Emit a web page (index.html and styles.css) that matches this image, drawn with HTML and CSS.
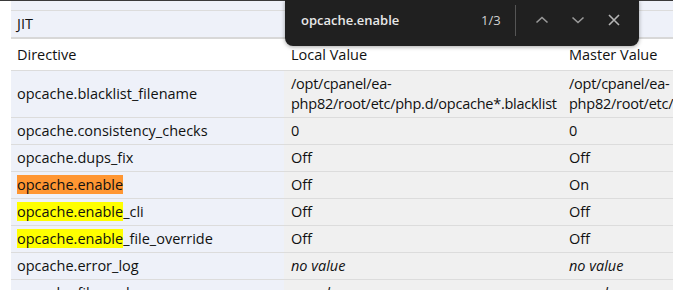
FILE: index.html
```html
<!DOCTYPE html>
<html>
<head>
    <meta charset="UTF-8">
    <meta name="viewport" content="width=device-width, initial-scale=1.0">
    <title>opcache</title>
    <link rel="stylesheet" href="styles.css">
</head>
<body>
    <div class="topline"></div>
    <div class="page">
        <table class="info">
            <tr class="section cut">
                <td class="e"><div class="clip"><span>File cache</span></div></td>
                <td class="v"></td>
                <td class="v"></td>
            </tr>
            <tr class="section jit">
                <td class="e">JIT</td>
                <td class="v"></td>
                <td class="v"></td>
            </tr>
            <tr class="head">
                <td>Directive</td>
                <td>Local Value</td>
                <td>Master Value</td>
            </tr>
            <tr>
                <td class="e">opcache.blacklist_filename</td>
                <td class="v path">/opt/cpanel/ea-<br>php82/root/etc/php.d/opcache*.blacklist</td>
                <td class="v path">/opt/cpanel/ea-<br>php82/root/etc/php.d/opcache*.blacklist</td>
            </tr>
            <tr>
                <td class="e">opcache.consistency_checks</td>
                <td class="v">0</td>
                <td class="v">0</td>
            </tr>
            <tr>
                <td class="e">opcache.dups_fix</td>
                <td class="v">Off</td>
                <td class="v">Off</td>
            </tr>
            <tr>
                <td class="e"><mark class="current">opcache.enable</mark></td>
                <td class="v">Off</td>
                <td class="v">On</td>
            </tr>
            <tr>
                <td class="e"><mark>opcache.enable</mark>_cli</td>
                <td class="v">Off</td>
                <td class="v">Off</td>
            </tr>
            <tr>
                <td class="e"><mark>opcache.enable</mark>_file_override</td>
                <td class="v">Off</td>
                <td class="v">Off</td>
            </tr>
            <tr>
                <td class="e">opcache.error_log</td>
                <td class="v"><i>no value</i></td>
                <td class="v"><i>no value</i></td>
            </tr>
            <tr>
                <td class="e">opcache.file_cache</td>
                <td class="v"><i>no value</i></td>
                <td class="v"><i>no value</i></td>
            </tr>
        </table>
    </div>

    <div class="findbar">
        <span class="query">opcache.enable</span>
        <span class="count">1/3</span>
        <span class="sep"></span>
        <svg class="icon" width="14" height="14" viewBox="0 0 14 14"><path d="M1.5 9.5 L7 4.5 L12.5 9.5" fill="none" stroke="#9a9a9a" stroke-width="1.6"/></svg>
        <svg class="icon" width="14" height="14" viewBox="0 0 14 14"><path d="M1.5 4.5 L7 9.5 L12.5 4.5" fill="none" stroke="#9a9a9a" stroke-width="1.6"/></svg>
        <svg class="icon" width="14" height="14" viewBox="0 0 14 14"><path d="M2 2 L12 12 M12 2 L2 12" fill="none" stroke="#b5b5b5" stroke-width="1.6"/></svg>
    </div>
</body>
</html>
```

FILE: styles.css
```css
body {
    margin: 0;
    font-family: "Open Sans", "Noto Sans", sans-serif;
    font-size: 14.5px;
    color: #111;
    background: #fff;
    overflow: hidden;
}
.topline {
    height: 1px;
    background: #3a3a3a;
}
.page {
    padding-left: 11px;
    height: 289px;
    overflow: hidden;
}
.info {
    border-collapse: collapse;
    width: 860px;
    table-layout: fixed;
}
.info td {
    padding: 3px 6px 3px 7px;
    line-height: 20px;
    height: 20px;
    border-bottom: 1px solid #dcdcdc;
    vertical-align: middle;
    white-space: nowrap;
}
.info td:nth-child(1) { width: 261px; padding-left: 6px; }
.info td:nth-child(2) { width: 265px; }
.path {
    letter-spacing: -0.25px;
}
.e {
    background: #eef1f9;
}
.v {
    background: #f0f0f0;
}
.section td {
    background: #eef1f9;
}
.section.cut td {
    height: 9px;
    padding-top: 0;
    padding-bottom: 0;
    line-height: 9px;
}
.clip {
    height: 9px;
    overflow: hidden;
}
.clip span {
    display: block;
    line-height: 20px;
    margin-top: -15px;
}
.jit td {
    height: 19px;
    border-bottom: 2px solid #d8d8d8;
}
.head td {
    background: #fff;
    height: 25px;
}
mark {
    background: #ffff00;
    color: #111;
}
mark.current {
    background: #ff9632;
}
.findbar {
    position: absolute;
    top: 0;
    left: 285px;
    width: 354px;
    height: 46px;
    box-sizing: border-box;
    background: #202020;
    border-radius: 0 0 8px 8px;
    box-shadow: 0 1px 4px rgba(0, 0, 0, 0.35);
    display: flex;
    align-items: center;
    padding: 0 0 6px 16px;
    color: #e8e8e8;
    font-family: "Open Sans", sans-serif;
    font-size: 13px;
}
.query {
    font-weight: 600;
    width: 180px;
}
.count {
    color: #d0d0d0;
    width: 34px;
}
.sep {
    width: 1px;
    height: 31px;
    background: #555;
    margin-right: 8px;
}
.icon {
    margin: 0 11px;
}
```
